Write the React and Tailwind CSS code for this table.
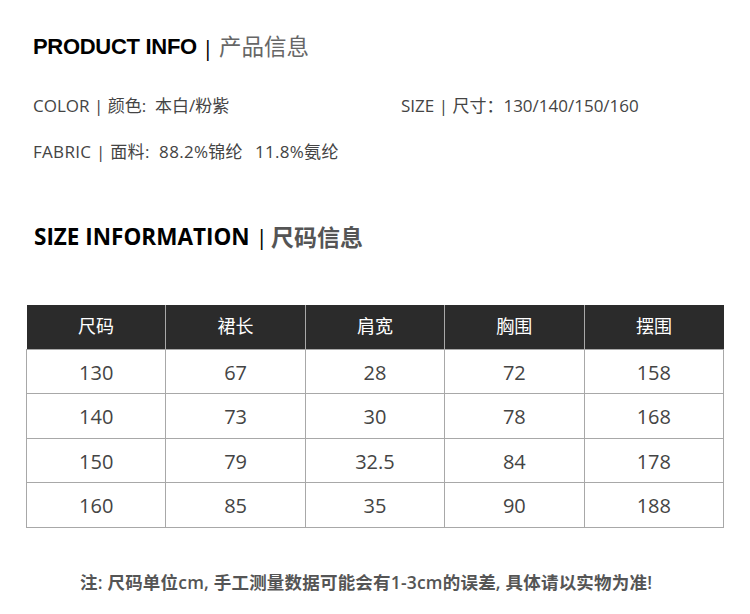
const heads = ['尺码', '裙长', '肩宽', '胸围', '摆围']
const rows = [
  ['130', '67', '28', '72', '158'],
  ['140', '73', '30', '78', '168'],
  ['150', '79', '32.5', '84', '178'],
  ['160', '85', '35', '90', '188'],
]

const cjk = { fontFamily: '"Open Sans", "Noto Sans CJK SC", sans-serif' }

export default function App() {
  return (
    <div className="w-[750px] h-[614px] bg-white text-[#444]" style={cjk}>
      <div className="pt-[32px] pl-[33px]">
        <h1 className="flex items-center text-[22px] leading-[30px] h-[30px]">
          <span className="font-bold text-black tracking-[-0.3px]" style={{ fontFamily: '"Liberation Sans", Arial, sans-serif' }}>PRODUCT INFO</span>
          <span className="ml-[5px] text-black font-normal">|</span>
          <span className="ml-[5px] text-[#666] text-[22.5px]">产品信息</span>
        </h1>
      </div>

      <div className="pl-[33px] mt-[32px] text-[17px] leading-[24px]">
        <div className="flex">
          <div className="w-[368px]">COLOR | 颜色:&nbsp; 本白/粉紫</div>
          <div>SIZE | 尺寸：130/140/150/160</div>
        </div>
        <div className="mt-[22px] tracking-[0.3px]">
          FABRIC | 面料:&nbsp; 88.2%锦纶<span className="ml-[12px]">11.8%氨纶</span>
        </div>
      </div>

      <h2 className="pl-[34px] mt-[58px] h-[30px] leading-[30px] text-[22.5px] font-bold text-black flex items-center">
        <span>SIZE INFORMATION</span>
        <span className="ml-[6px] font-normal">|</span>
        <span className="ml-[3px] text-[#555] text-[23px]">尺码信息</span>
      </h2>

      <table className="ml-[26px] mt-[53px] w-[698px] border-collapse table-fixed">
        <thead>
          <tr className="bg-[#2b2b2b] text-white h-[44px]">
            {heads.map((h, i) => (
              <th key={h} className={`font-normal text-[18px] text-center border-[#a8a8a8] ${i > 0 ? 'border-l' : ''}`}>{h}</th>
            ))}
          </tr>
        </thead>
        <tbody>
          {rows.map((r) => (
            <tr key={r[0]} className="h-[44.5px]">
              {r.map((c, i) => (
                <td key={i} className="text-center text-[20px] border border-[#a8a8a8] pt-[3px]">{c}</td>
              ))}
            </tr>
          ))}
        </tbody>
      </table>

      <p className="pl-[80px] mt-[41px] text-[17.5px] tracking-[0.2px] font-semibold text-[#555]">
        注: 尺码单位cm, 手工测量数据可能会有1-3cm的误差, 具体请以实物为准!
      </p>
    </div>
  )
}
